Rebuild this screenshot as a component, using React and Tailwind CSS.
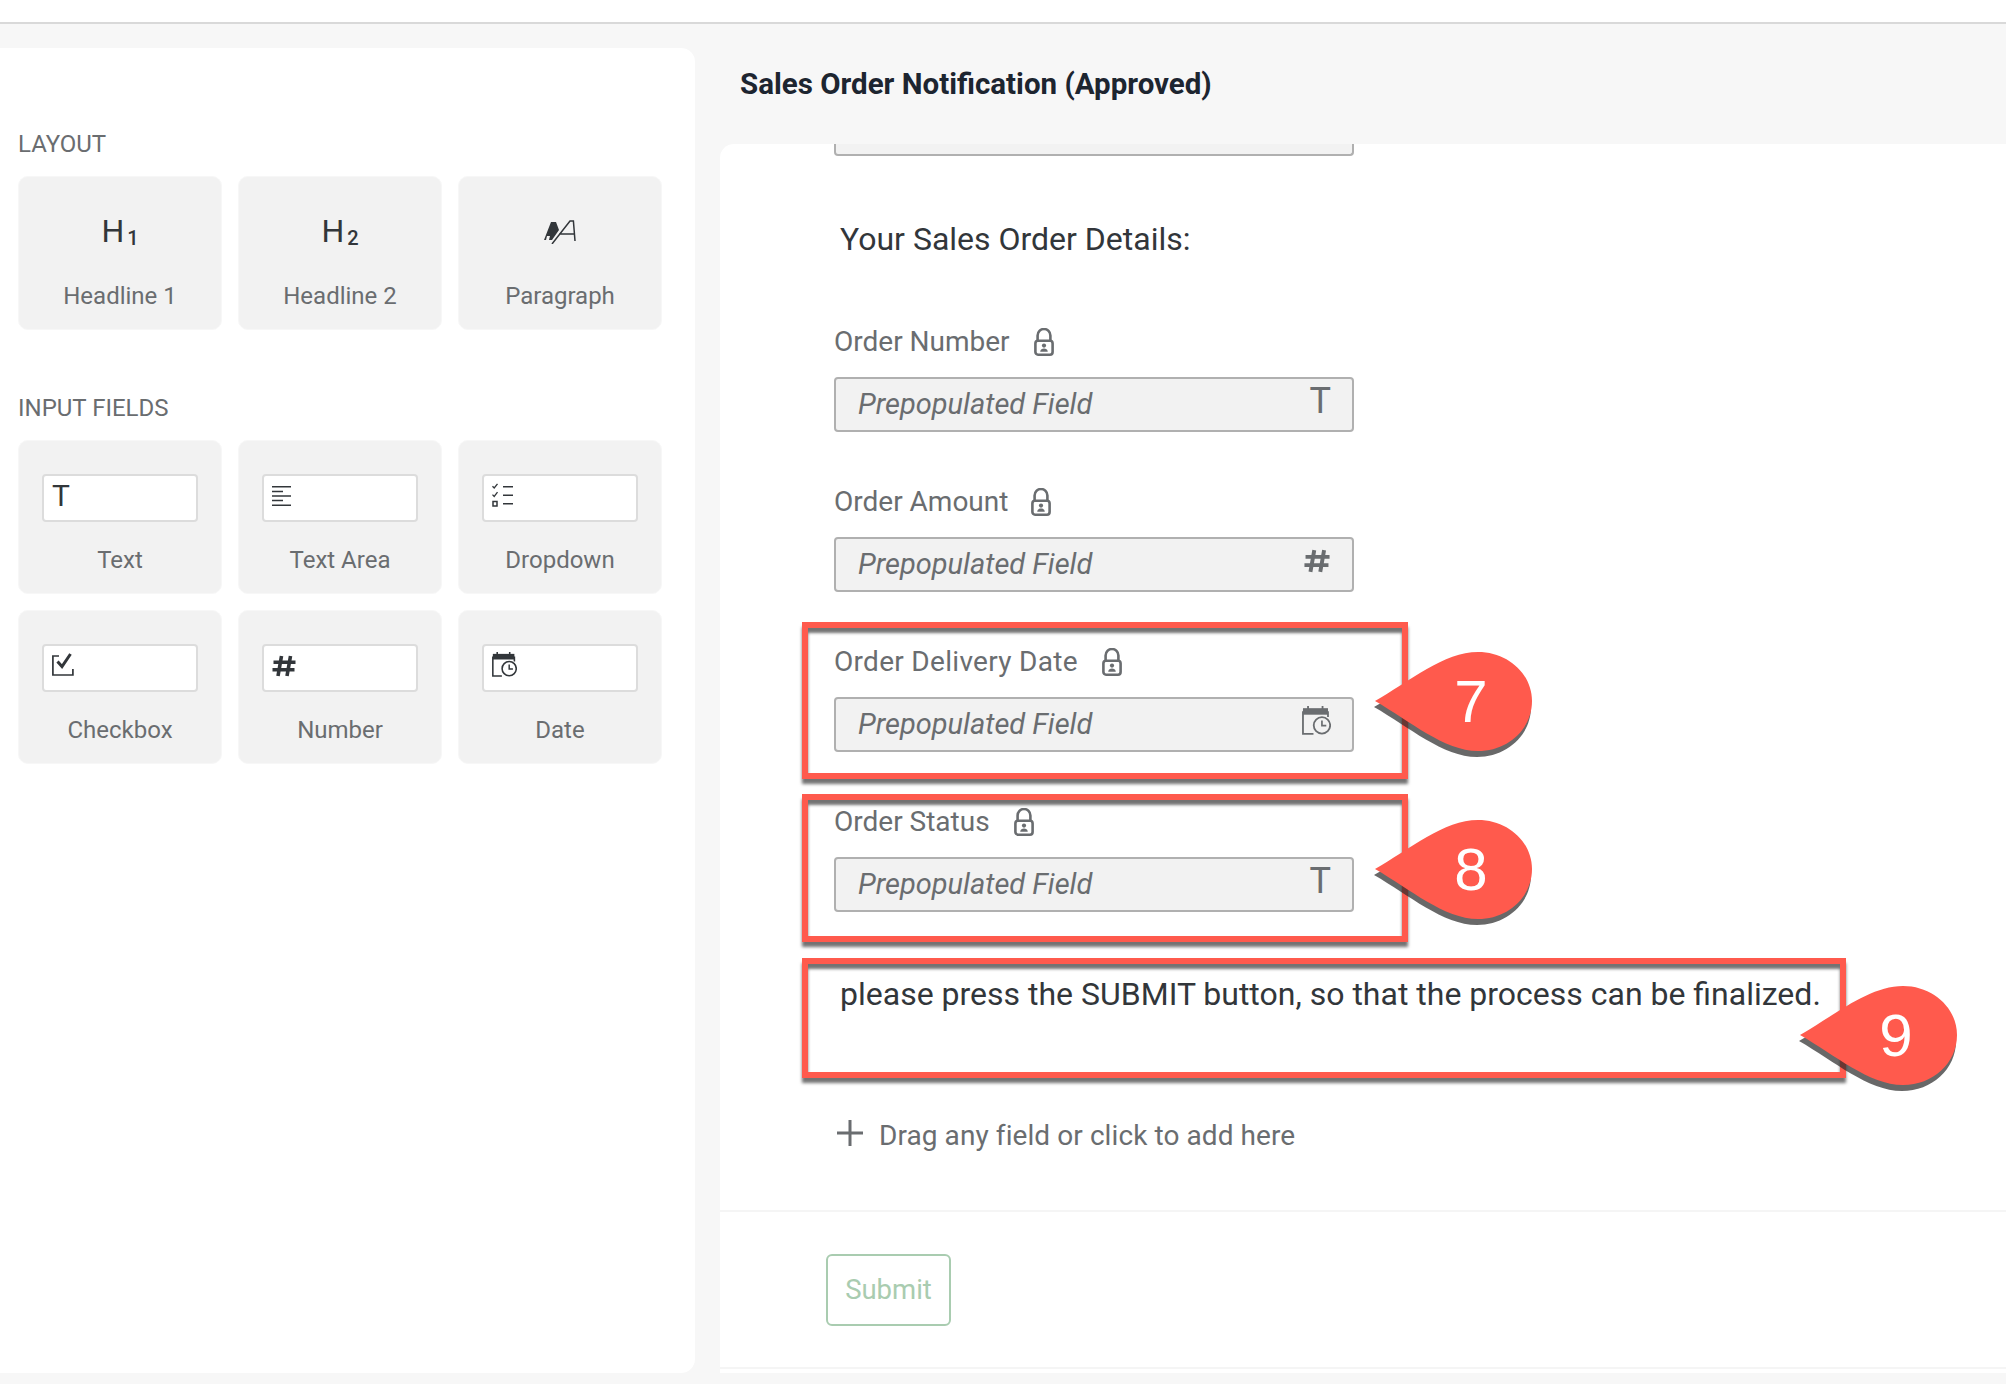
import React from "react";

const Lock = ({ className = "" }) => (
  <svg viewBox="0 0 20 28" className={`w-[20px] h-[28px] shrink-0 ${className}`} fill="none" stroke="#6a6d70" strokeWidth="2.600">
    <path d="M3.600 13V7.400a6.400 6.400 0 0 1 12.800 0V13" />
    <rect x="1.400" y="12.800" width="17.200" height="13.900" rx="2.600" />
    <circle cx="10" cy="17.600" r="2.100" fill="#6a6d70" stroke="none" />
    <path d="M6.200 23.800c.4-2.600 1.800-3.200 3.800-3.200s3.400.6 3.800 3.200z" fill="#6a6d70" stroke="none" />
  </svg>
);

const Hash = ({ className = "", color = "#32363a" }) => (
  <svg viewBox="0 0 24 22" className={className} fill="none" stroke={color} strokeWidth="3.600">
    <path d="M9.500 1 6 21M18.500 1 15 21M1.500 7.200h22M.5 14.800h22" />
  </svg>
);

const CalClock = ({ className = "", color = "#32363a" }) => (
  <svg viewBox="0 0 24 24" className={className} fill="none" stroke={color}>
    <path d="M9.500 23H.8V5h20.700v4" strokeWidth="1.500" />
    <path d="M.8 1.800h20.700V7.200H.8z" fill={color} stroke="none" />
    <path d="M5 0v3M17 0v3" strokeWidth="1.500" stroke={color} />
    <circle cx="16.500" cy="16" r="6.800" strokeWidth="1.500" />
    <path d="M16.500 12v4.300h3.600" strokeWidth="1.400" />
  </svg>
);

const TextAreaIcon = () => (
  <svg viewBox="0 0 19 20" className="w-[19px] h-[20px] mt-[10px]" stroke="#32363a" strokeWidth="1.500">
    <path d="M0 .8h19M0 5.400h11M0 10h19M0 14.400h11M0 19.200h19" />
  </svg>
);

const ListIcon = () => (
  <svg viewBox="0 0 21 24" className="w-[21px] h-[24px] mt-[7px]" fill="none" stroke="#32363a">
    <path d="M.5 3.200 2.200 5 5.500.8M.5 11.600l1.700 1.800 3.300-4.200" strokeWidth="1.300" />
    <rect x="1" y="18.500" width="4" height="4.500" strokeWidth="1.500" />
    <path d="M11 3.800h10M11 12.200h10M11 20.800h10" strokeWidth="1.500" />
  </svg>
);

const CheckIcon = () => (
  <svg viewBox="0 0 23 23" className="w-[23px] h-[23px] mt-[7px]" fill="none" stroke="#32363a">
    <path d="M7 3H.9v19h20v-6" strokeWidth="1.700" />
    <path d="M5.500 8.500 10 13.500 18.500 1" strokeWidth="3" />
  </svg>
);

const ParaIcon = () => (
  <svg viewBox="0 0 32 24" className="w-[32px] h-[24px]" fill="none">
    <path d="M0 20 7 2h5l3 8-7 10H5l1-4H3l-1 4z" fill="#32363a" />
    <path d="M8 24 26 1h3.400L31 21M15 14h15" stroke="#32363a" strokeWidth="1.500" />
  </svg>
);

const Card = ({ label, children }) => (
  <div className="w-[204px] h-[154px] bg-[#f2f2f2] rounded-[10px] border border-[#f7f7f7] flex flex-col items-center">
    <div className="h-[102px] w-full flex flex-col items-center justify-center pt-[8px]">{children}</div>
    <div className="text-[#6a6d70] text-[24px] leading-[34px]">{label}</div>
  </div>
);

const InputCard = ({ label, children }) => (
  <div className="w-[204px] h-[154px] bg-[#f2f2f2] rounded-[10px] border border-[#f7f7f7] flex flex-col items-center pt-[33px]">
    <div className="w-[156px] h-[48px] bg-white border-2 border-[#dcdcdc] rounded-[4px] pl-[8px] flex items-start">{children}</div>
    <div className="text-[#6a6d70] text-[24px] leading-[34px] mt-[21px]">{label}</div>
  </div>
);

const HeadIcon = ({ n }) => (
  <div className="flex items-end text-[#32363a] leading-none -mt-[2px]">
    <span className="text-[32px] font-normal leading-[26px]">H</span>
    <span className="text-[20px] font-medium leading-[18px] ml-[3px] -mb-[3px]">{n}</span>
  </div>
);

const Field = ({ label, icon, labelClass = "", lockClass = "ml-[24px]" }) => (
  <div className="h-[160px] w-[520px] ml-[114px]">
    <div className="h-[40px] flex items-center text-[#6a6d70] text-[28px]">
      <span className={labelClass}>{label}</span>
      <Lock className={lockClass} />
    </div>
    <div className="mt-[15px] h-[55px] bg-[#f2f2f2] border-2 border-[#b0b0b0] rounded-[4px] flex items-center justify-between pl-[22px] pr-[21px]">
      <span className="text-[#6a6d70] italic text-[29px]">Prepopulated Field</span>
      {icon}
    </div>
  </div>
);

const BigT = () => (
  <span className="text-[36px] font-normal text-[#6a6d70] leading-none -mt-[8px]">T</span>
);

const Drop = ({ n, x, y }) => (
  <div className="absolute w-[170px] h-[112px]" style={{ left: x, top: y }}>
    <svg viewBox="0 0 170 112" className="absolute inset-0 w-[170px] h-[112px]">
      <path
        d="M1 56C36 36 70 7 104 7c30 0 54 22 54 49 0 28-24 50-54 50C70 106 36 76 1 56Z"
        transform="translate(-1 5)"
        fill="rgba(40,40,40,.7)"
      />
      <path d="M1 55C36 35 70 6 104 6c30 0 54 22 54 49 0 28-24 50-54 50C70 105 36 75 1 55Z" fill="#ff5a4d" />
    </svg>
    <span className="absolute left-[60px] top-[14px] w-[74px] text-center text-white text-[60px] leading-[84px] font-['Liberation_Sans',sans-serif]">
      {n}
    </span>
  </div>
);

const Frame = ({ className }) => (
  <div
    className={`absolute border-[6px] border-[#ff5a4d] shadow-[0_5px_3px_rgba(0,0,0,.55),inset_0_5px_3px_rgba(0,0,0,.55)] ${className}`}
  />
);

export default function App() {
  return (
    <div className="relative w-[2006px] h-[1384px] overflow-hidden bg-[#f7f7f7] font-['Roboto',sans-serif]">
      <div className="h-[24px] bg-white border-b-2 border-[#d9d9d9]" />
      <div className="flex h-[1325px] mt-[24px]">
        <aside className="w-[695px] shrink-0 bg-white rounded-r-[14px] pl-[18px]">
          <div className="pt-[78px] h-[128px] text-[#6a6d70] text-[24px] leading-[36px]">LAYOUT</div>
          <div className="flex gap-[16px]">
            <Card label="Headline 1"><HeadIcon n="1" /></Card>
            <Card label="Headline 2"><HeadIcon n="2" /></Card>
            <Card label="Paragraph"><ParaIcon /></Card>
          </div>
          <div className="mt-[60px] h-[50px] text-[#6a6d70] text-[24px] leading-[36px]">INPUT FIELDS</div>
          <div className="grid grid-cols-[204px_204px_204px] gap-[16px]">
            <InputCard label="Text">
              <span className="text-[30px] font-normal text-[#32363a] leading-none mt-[5px]">T</span>
            </InputCard>
            <InputCard label="Text Area"><TextAreaIcon /></InputCard>
            <InputCard label="Dropdown"><ListIcon /></InputCard>
            <InputCard label="Checkbox"><CheckIcon /></InputCard>
            <InputCard label="Number"><Hash className="w-[24px] h-[22px] mt-[9px]" /></InputCard>
            <InputCard label="Date"><CalClock className="w-[25px] h-[25px] mt-[6px]" /></InputCard>
          </div>
        </aside>
        <main className="flex-1 flex flex-col">
          <div className="h-[96px] pl-[45px] pb-[24px] flex items-center text-[#1d2530] text-[29.500px] font-bold">
            Sales Order Notification (Approved)
          </div>
          <div className="ml-[25px] flex-1 bg-white rounded-tl-[14px] overflow-hidden flex flex-col">
            <div className="h-[12px] w-[520px] ml-[114px] bg-[#f2f2f2] border-2 border-t-0 border-[#b0b0b0] rounded-b-[4px]" />
            <div className="mt-[63px] h-[40px] ml-[120px] flex items-center text-[#32363a] text-[32px]">
              Your Sales Order Details:
            </div>
            <div className="mt-[63px]">
              <Field label="Order Number" icon={<BigT />} />
              <Field
                label="Order Amount"
                lockClass="ml-[23px]"
                icon={<Hash className="w-[28px] h-[24px] -mt-[8px]" color="#6a6d70" />}
              />
              <Field
                label="Order Delivery Date"
                labelClass="tracking-[0.3px]"
                icon={<CalClock className="w-[29px] h-[29px] -mt-[9px]" color="#6a6d70" />}
              />
              <Field label="Order Status" icon={<BigT />} />
            </div>
            <div className="mt-[12px] h-[40px] ml-[120px] flex items-center text-[#32363a] text-[32px] whitespace-nowrap">
              please press the SUBMIT button, so that the process can be finalized.
            </div>
            <div className="mt-[102px] h-[40px] ml-[117px] flex items-center text-[#6a6d70] text-[28px]">
              <svg viewBox="0 0 26 26" className="w-[26px] h-[26px] -mt-[6px]" stroke="#6a6d70" strokeWidth="3">
                <path d="M13 0v26M0 13h26" />
              </svg>
              <span className="ml-[16px] tracking-[0.08px]">Drag any field or click to add here</span>
            </div>
            <div className="mt-[54px] h-[159px] border-t-2 border-b-2 border-[#f5f5f5] pl-[106px] pt-[42px]">
              <div className="w-[125px] h-[72px] border-2 border-[#a9ccb0] rounded-[6px] flex items-center justify-center text-[#a9ccb0] text-[27.500px]">
                Submit
              </div>
            </div>
          </div>
        </main>
      </div>
      <Frame className="left-[802px] top-[622px] w-[606px] h-[157px]" />
      <Frame className="left-[802px] top-[794px] w-[606px] h-[148px]" />
      <Frame className="left-[802px] top-[958px] w-[1044px] h-[120px]" />
      <Drop n="7" x={1374} y={646} />
      <Drop n="8" x={1374} y={814} />
      <Drop n="9" x={1799} y={980} />
    </div>
  );
}
